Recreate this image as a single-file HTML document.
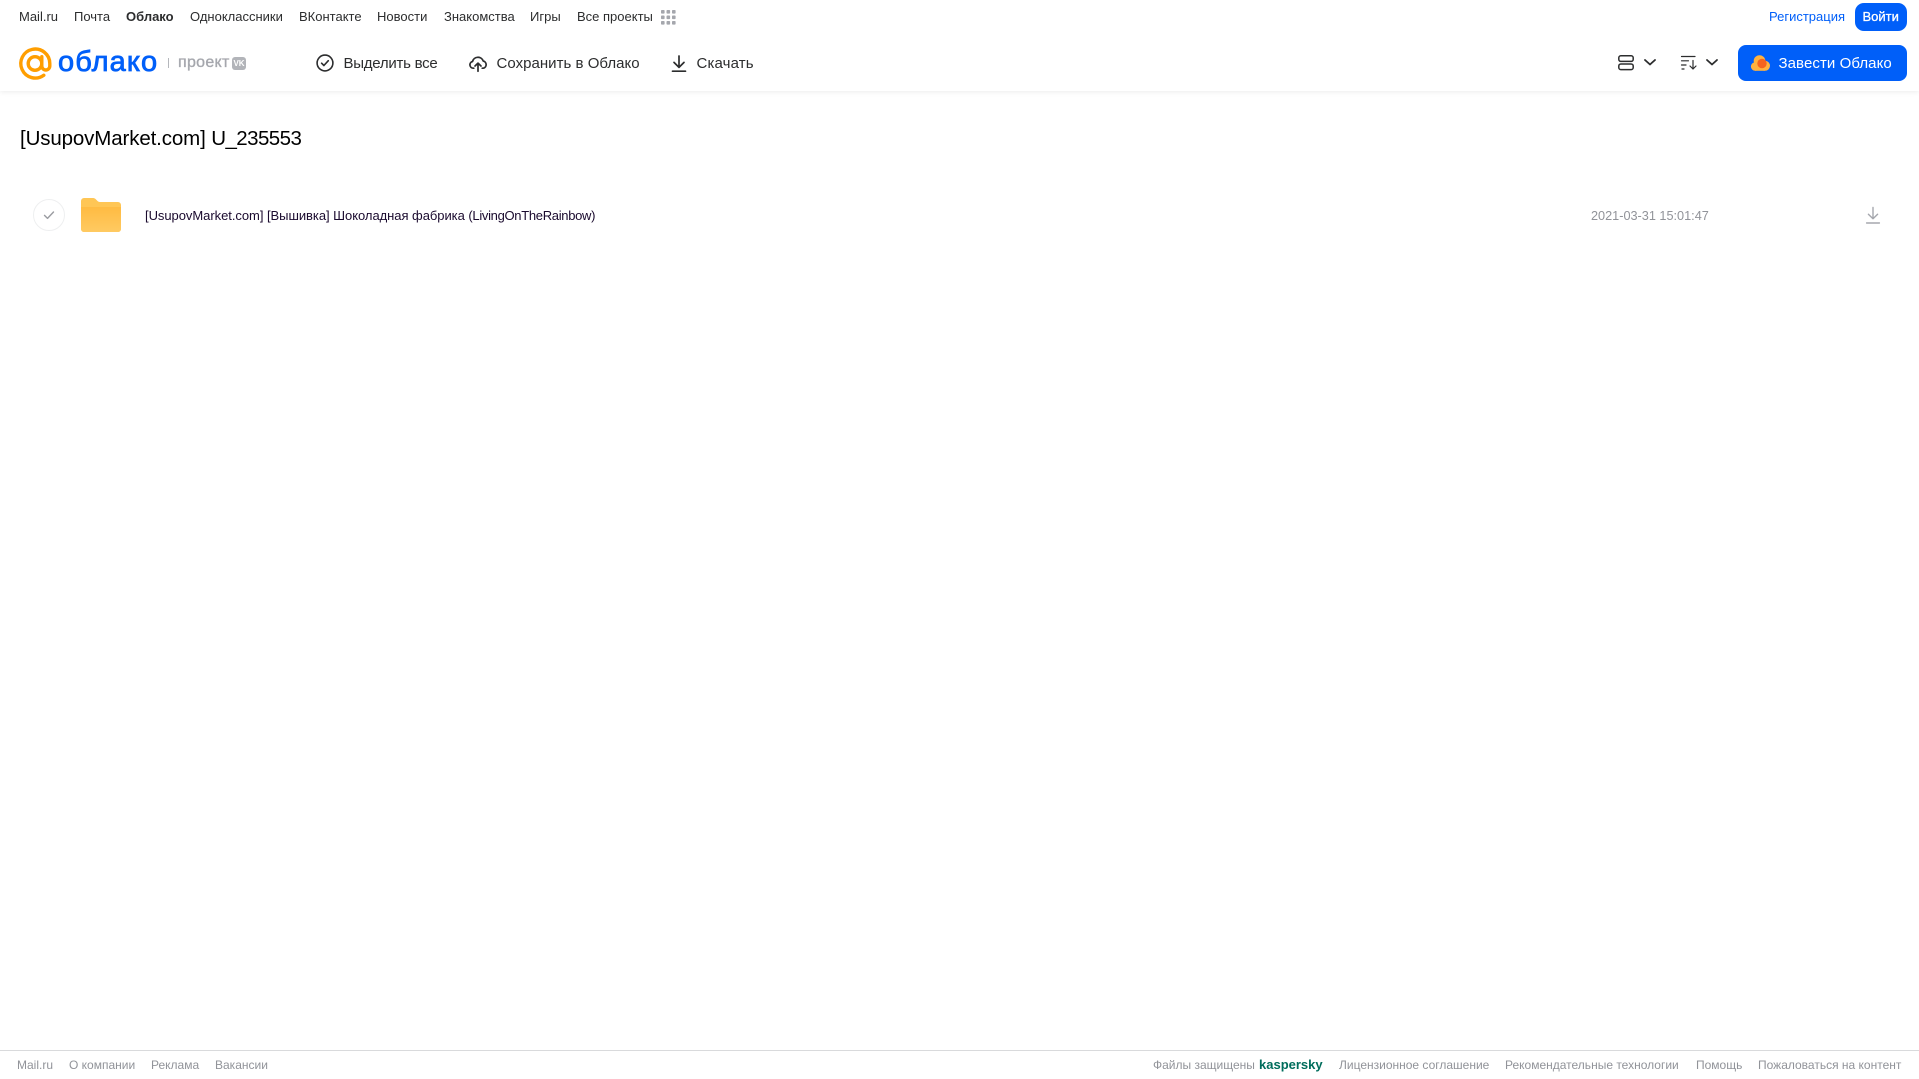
<!DOCTYPE html>
<html lang="ru">
<head>
<meta charset="utf-8">
<title>[UsupovMarket.com] U_235553</title>
<style>
html,body{margin:0;padding:0;background:#fff}
body{position:relative;width:1919px;height:1079px;overflow:hidden;font-family:"Liberation Sans",Arial,sans-serif}
.t{position:absolute;white-space:nowrap;line-height:20px;height:20px}
.n{top:7px;font-size:13px;color:#2c2d2e}
.a{top:54px;font-size:15px;color:#2c2d2e}
.f{top:1055px;font-size:12px;color:#919399}
svg{position:absolute;overflow:visible}
#head{position:absolute;left:0;top:0;width:1919px;height:91px;background:#fff;box-shadow:0 1px 5px rgba(0,0,0,.08)}
</style>
</head>
<body>
<div id="head"></div>

<span class="t n" style="left:19px">Mail.ru</span>
<span class="t n" style="left:74px">Почта</span>
<span class="t n" style="left:126px;font-weight:bold">Облако</span>
<span class="t n" style="left:190px">Одноклассники</span>
<span class="t n" style="left:299px">ВКонтакте</span>
<span class="t n" style="left:377px">Новости</span>
<span class="t n" style="left:444px">Знакомства</span>
<span class="t n" style="left:530px">Игры</span>
<span class="t n" style="left:577px">Все проекты</span>
<svg style="left:661px;top:10px" width="15" height="15" viewBox="0 0 15 15" fill="#a5a7ad">
<rect x="0" y="0" width="3.6" height="3.6" rx=".8"/><rect x="5.5" y="0" width="3.6" height="3.6" rx=".8"/><rect x="11" y="0" width="3.6" height="3.6" rx=".8"/>
<rect x="0" y="5.5" width="3.6" height="3.6" rx=".8"/><rect x="5.5" y="5.5" width="3.6" height="3.6" rx=".8"/><rect x="11" y="5.5" width="3.6" height="3.6" rx=".8"/>
<rect x="0" y="11" width="3.6" height="3.6" rx=".8"/><rect x="5.5" y="11" width="3.6" height="3.6" rx=".8"/><rect x="11" y="11" width="3.6" height="3.6" rx=".8"/>
</svg>

<span class="t n" style="left:1769px;color:#005ff9">Регистрация</span>
<div style="position:absolute;left:1855px;top:3px;width:52px;height:28px;border-radius:9px;background:#005ff9"></div>
<span class="t n" style="left:1862.500px;color:#fff;-webkit-text-stroke:.3px #fff">Войти</span>

<svg style="left:19px;top:47px" width="33" height="33" viewBox="0 0 33 33" fill="none" stroke="#ff9e00" stroke-width="3.4" stroke-linecap="round">
<circle cx="16" cy="16.500" r="6.800"/>
<path d="M22.800 9.700v9.300a4 4 0 0 0 8 0v-2.500a14.500 14.500 0 1 0-6 11.800"/>
</svg>
<span class="t" style="left:58px;top:46px;height:32px;line-height:32px;font-size:29px;color:#005ff9;letter-spacing:1.1px;-webkit-text-stroke:.8px #005ff9">облако</span>
<div style="position:absolute;left:168px;top:58px;width:1px;height:10px;background:#b5b7bc"></div>
<span class="t" style="left:178px;top:53px;font-size:16px;color:#a5a7ad;letter-spacing:.3px;-webkit-text-stroke:.35px #a5a7ad">проект</span>
<div style="position:absolute;left:232px;top:57px;width:14px;height:13px;border-radius:3px;background:#b2b4b9;color:#fff;font-size:8px;font-weight:bold;line-height:13px;text-align:center">VK</div>

<svg style="left:315px;top:53px" width="20" height="20" viewBox="0 0 20 20" fill="none" stroke="#2c2d2e" stroke-width="1.6" stroke-linecap="round" stroke-linejoin="round">
<circle cx="10" cy="10" r="7.900"/><path d="M6.600 10.200l2.300 2.300 4.400-4.800"/>
</svg>
<span class="t a" style="left:343.500px;letter-spacing:-.25px">Выделить все</span>

<svg style="left:469px;top:55px" width="18" height="17" viewBox="0 0 18 17" fill="none" stroke="#2c2d2e" stroke-width="1.7" stroke-linecap="round" stroke-linejoin="round">
<path d="M4.800 13.200H4.300A3.400 3.400 0 0 1 3.500 6.500 5.600 5.600 0 0 1 14.200 6a3.700 3.700 0 0 1 .2 7.200h-1.200"/><path d="M9 16.300V8.500M6 11l3-2.900 3 2.900"/>
</svg>
<span class="t a" style="left:496.500px;letter-spacing:.03px">Сохранить в Облако</span>

<svg style="left:669px;top:53px" width="20" height="20" viewBox="0 0 20 20" fill="none" stroke="#2c2d2e" stroke-width="1.7" stroke-linecap="round" stroke-linejoin="round">
<path d="M10 3v11.200M5 9.400l5 5 5-5M3.500 18.200h13"/>
</svg>
<span class="t a" style="left:696.500px;letter-spacing:.13px">Скачать</span>

<svg style="left:1617px;top:53px" width="18" height="19" viewBox="0 0 18 19" fill="none" stroke="#2c2d2e" stroke-width="1.5">
<rect x="1.800" y="2.800" width="14.400" height="5.600" rx="2"/><rect x="1.800" y="11" width="14.400" height="5.600" rx="2"/>
</svg>
<svg style="left:1643px;top:58px" width="14" height="9" viewBox="0 0 14 9" fill="none" stroke="#2c2d2e" stroke-width="1.8" stroke-linecap="round" stroke-linejoin="round"><path d="M2 2l5 4.500L12 2"/></svg>
<svg style="left:1680px;top:54px" width="18" height="17" viewBox="0 0 18 17" fill="none" stroke="#2c2d2e" stroke-width="1.2" stroke-linecap="round" stroke-linejoin="round">
<path d="M1.500 2.500h13.500M1.500 6.800h7M1.500 11h4.500M2 15h2M13 6.500v8.500M10 12l3 3 3-3"/>
</svg>
<svg style="left:1705px;top:58px" width="14" height="9" viewBox="0 0 14 9" fill="none" stroke="#2c2d2e" stroke-width="1.8" stroke-linecap="round" stroke-linejoin="round"><path d="M2 2l5 4.500L12 2"/></svg>

<div style="position:absolute;left:1738px;top:45px;width:169px;height:36px;border-radius:8px;background:#005ff9"></div>
<svg style="left:1751px;top:55px" width="19" height="16" viewBox="0 0 19 16">
<g fill="#ffb23e"><circle cx="8.500" cy="6" r="5.800"/><circle cx="4.200" cy="11.500" r="4.300"/><circle cx="14" cy="10.800" r="5"/><rect x="4" y="9" width="10" height="6.800"/></g>
<circle cx="11" cy="8.500" r="4.700" fill="#f5641f"/>
</svg>
<span class="t a" style="left:1778.500px;color:#fff;letter-spacing:.08px">Завести Облако</span>

<span class="t" style="left:20px;top:127px;height:24px;line-height:24px;font-size:20.500px;letter-spacing:-.13px;color:#000">[UsupovMarket.com] <span style="letter-spacing:-.56px">U_235553</span></span>

<svg style="left:33px;top:199px" width="32" height="32" viewBox="0 0 32 32" fill="none">
<circle cx="16" cy="16" r="15.500" stroke="#eeeff0" fill="#fff"/>
<path d="M11.500 16.400l3 3 6-6.400" stroke="#9a9ca1" stroke-width="1.400" stroke-linecap="round" stroke-linejoin="round"/>
</svg>
<svg style="left:81px;top:198px" width="40" height="34" viewBox="0 0 40 34">
<defs><linearGradient id="g" x1="0" y1="0" x2="0" y2="1"><stop offset="0" stop-color="#ffbb42"/><stop offset="1" stop-color="#ffca62"/></linearGradient></defs>
<path d="M3 0h8.500c2.200 0 3.200 1 4.300 2.300 1 1.200 1.700 1.700 3.200 1.700H37a3 3 0 0 1 3 3v24a3 3 0 0 1-3 3H3a3 3 0 0 1-3-3V3a3 3 0 0 1 3-3z" fill="#ffc655"/>
<path d="M0 9h40v22a3 3 0 0 1-3 3H3a3 3 0 0 1-3-3z" fill="url(#g)"/>
</svg>
<span class="t" style="left:145px;top:206px;font-size:13px;letter-spacing:-.045px;color:#1a0a2e">[UsupovMarket.com] [Вышивка] Шоколадная фабрика <span style="letter-spacing:-.31px">(LivingOnTheRainbow)</span></span>
<span class="t" style="left:1591px;top:206px;font-size:12.700px;color:#919399">2021-03-31 15:01:47</span>
<svg style="left:1864px;top:206px" width="18" height="18" viewBox="0 0 18 18" fill="none" stroke="#a5a7ad" stroke-width="1.4" stroke-linecap="round" stroke-linejoin="round">
<path d="M9 1.500v11.200M4.400 8.200L9 12.800l4.600-4.600M2.600 17h12.800"/>
</svg>

<div style="position:absolute;left:0;top:1050px;width:1919px;height:1px;background:#d9dadc"></div>
<span class="t f" style="left:17px">Mail.ru</span>
<span class="t f" style="left:69px">О компании</span>
<span class="t f" style="left:151px">Реклама</span>
<span class="t f" style="left:215px">Вакансии</span>
<span class="t f" style="left:1153px">Файлы защищены</span>
<span class="t f" style="left:1259px;font-size:13px;font-weight:bold;color:#006d5c">kaspersky</span>
<span class="t f" style="left:1339px">Лицензионное соглашение</span>
<span class="t f" style="left:1505px">Рекомендательные технологии</span>
<span class="t f" style="left:1696px">Помощь</span>
<span class="t f" style="left:1758px">Пожаловаться на контент</span>
</body>
</html>
